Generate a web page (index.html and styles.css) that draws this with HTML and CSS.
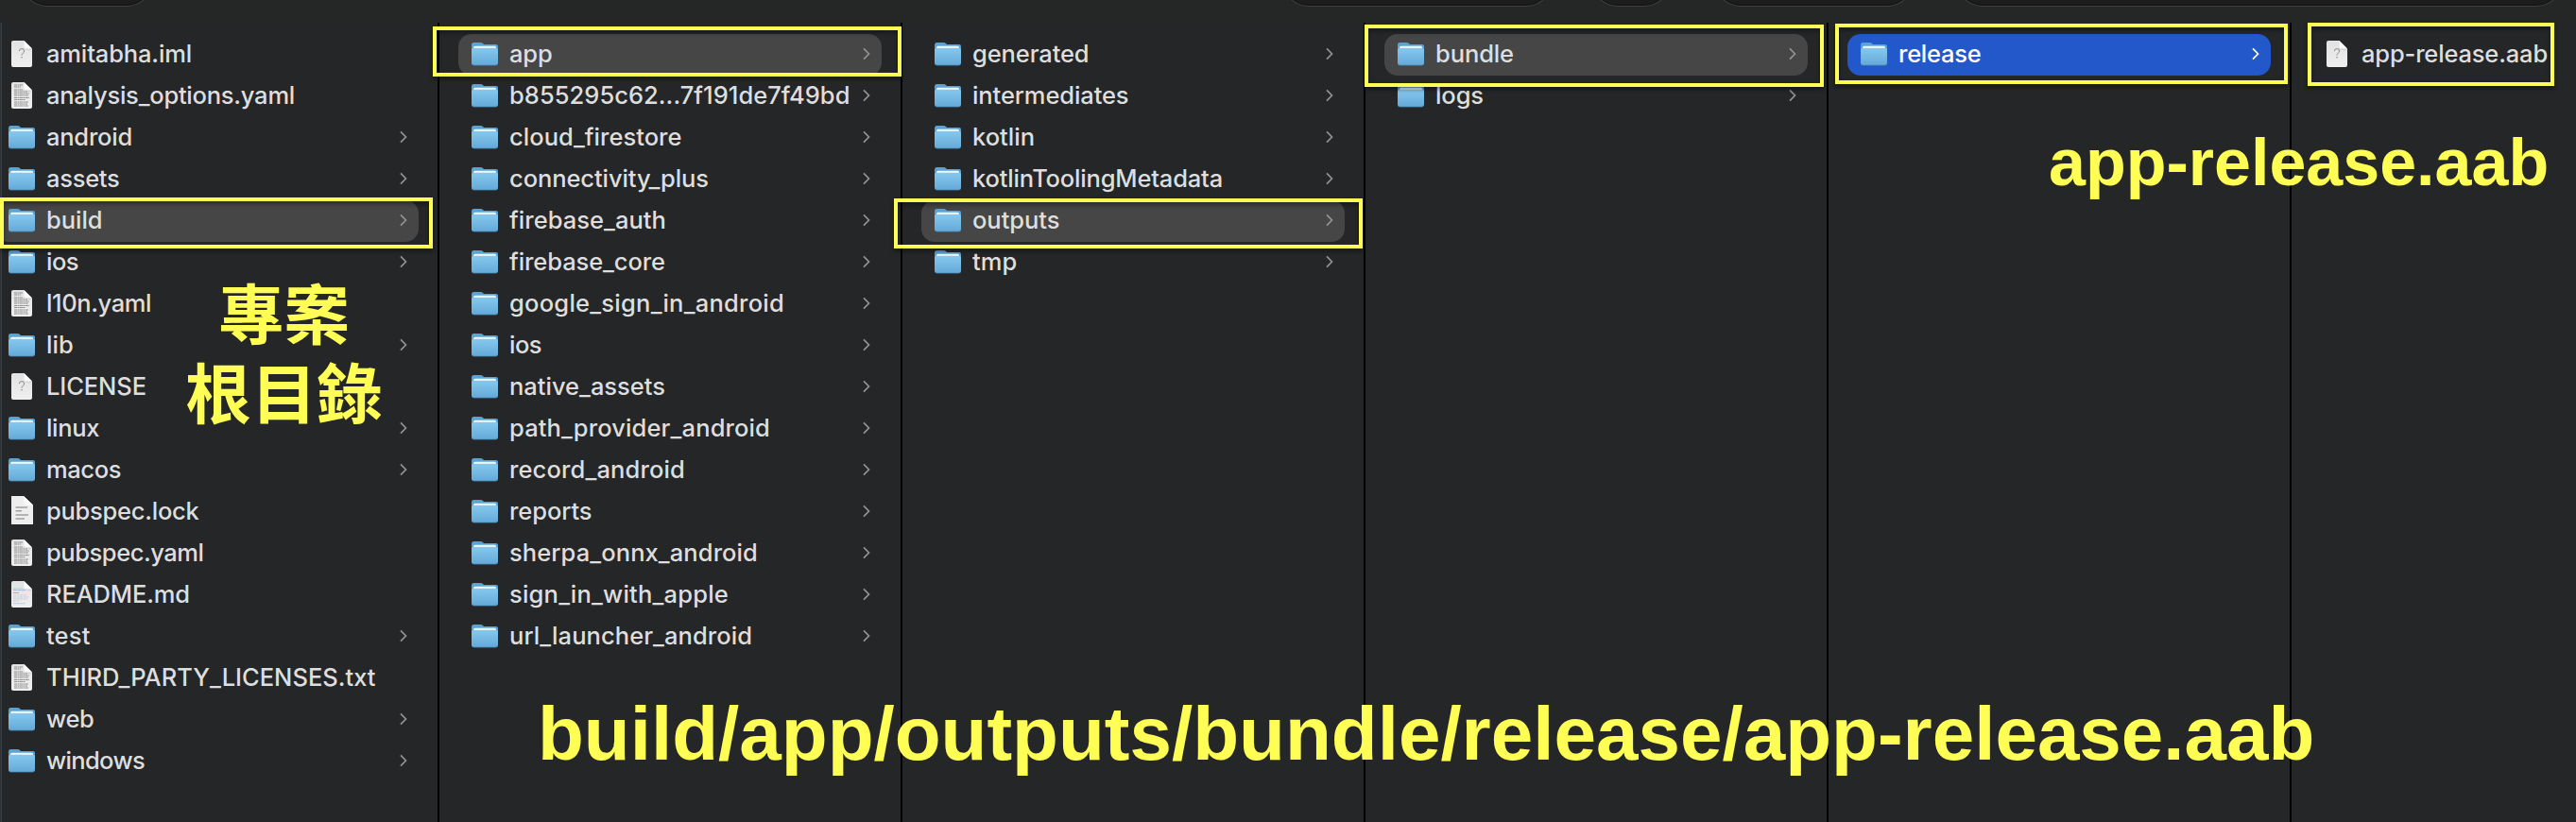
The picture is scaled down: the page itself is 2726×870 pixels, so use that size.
FILE: index.html
```
<!DOCTYPE html>
<html lang="zh-Hant">
<head>
<meta charset="utf-8">
<title>Finder</title>
<link rel="stylesheet" href="styles.css">
</head>
<body>
<svg width="0" height="0" class="defs">
  <defs>
    <linearGradient id="fg" x1="0" y1="0" x2="0" y2="1"><stop offset="0" stop-color="#86c8ee"/><stop offset="1" stop-color="#64a9d8"/></linearGradient>
    <linearGradient id="dg" x1="0" y1="0" x2="0" y2="1"><stop offset="0" stop-color="#e2e2e2"/><stop offset="1" stop-color="#efefef"/></linearGradient>
    <symbol id="folder" viewBox="0 0 28 26">
      <path d="M0 3.5Q0 1 2.5 1H9.5Q11 1 12 2L13 3H26Q28 3 28 5V12H0Z" fill="#5ba3d3"/>
      <rect x="2" y="4.800" width="24" height="5" rx="1.500" fill="#f6fafc"/>
      <path d="M0 9Q0 7 2 6.700H26Q28 7 28 9V22.500Q28 25 25.500 25H2.500Q0 25 0 22.500Z" fill="url(#fg)"/>
      <path d="M.3 23.300Q1 25 2.500 25H25.500Q27 25 27.700 23.300" fill="none" stroke="#4c8dba" stroke-width=".8"/>
    </symbol>
    <symbol id="page" viewBox="0 0 22 28">
      <path d="M2 0H13.500L22 8.500V26Q22 28 20 28H2Q0 28 0 26V2Q0 0 2 0Z" fill="url(#dg)"/>
      <path d="M13.500 0L22 8.500H15Q13.500 8.500 13.500 7Z" fill="#fafafa"/>
      <path d="M13.500 7Q13.500 8.500 15 8.500H22L20 10.500L12 9Z" fill="#000" opacity=".08"/>
    </symbol>
    <symbol id="unknown" viewBox="0 0 22 28">
      <use href="#page" width="22" height="28"/>
      <path d="M8.300 11.200Q8.300 8.600 10.900 8.600Q13.600 8.600 13.600 11Q13.600 12.500 12.200 13.300Q11 14.100 11 15.600" fill="none" stroke="#8b8b8b" stroke-width="1"/>
      <circle cx="11" cy="17.800" r=".8" fill="#8b8b8b"/>
    </symbol>
    <symbol id="text" viewBox="0 0 22 28">
      <use href="#page" width="22" height="28"/>
      <path d="M3 3H12M3 5H10M3 8H12M3 10H17M3 12H19M3 14H18M3 16.500H19M3 18.500H15M3 21H18M3 23H17M3 25H18" stroke="#8d8d8d" stroke-width="1" stroke-dasharray="3 .5 2 .4" fill="none"/>
    </symbol>
    <symbol id="lock" viewBox="0 0 23 30">
      <path d="M0 0H13L23 9.500V30H0Z" fill="#eee"/>
      <path d="M13 0L23 9.500H15.500Q13.500 9.500 13.500 7.500Z" fill="#fbfbfb"/>
      <path d="M4.500 12H17M4.500 15.700H11M4.500 20H18M4.500 24H14" stroke="#a0a0a0" stroke-width="1.500"/>
    </symbol>
    <symbol id="readme" viewBox="0 0 22 28">
      <use href="#page" width="22" height="28"/>
      <path d="M2 8H12" stroke="#9fc9cf" stroke-width="1" stroke-dasharray="3 .5"/>
      <path d="M2 9.700H15" stroke="#a5b5de" stroke-width="1" stroke-dasharray="4 .5"/>
      <path d="M2 12.500H8" stroke="#ef8fa2" stroke-width="1"/>
      <path d="M2 15H16M2 17H18M2 19H17M2 21H8" stroke="#cdcbdc" stroke-width="1" stroke-dasharray="3 .5"/>
      <path d="M2 23.700H15" stroke="#b3d0e8" stroke-width="1"/>
    </symbol>
    <symbol id="chev" viewBox="0 0 8 14"><path d="M1 1.300L6.500 7L1 12.700" fill="none" stroke="currentColor" stroke-width="1.700"/></symbol>
  </defs>
</svg>
<div class="window">
  <header class="toolbar">
    <i class="pill p1"></i><i class="pill p2"></i><i class="pill p3"></i><i class="pill p4"></i><i class="pill p5"></i>
  </header>
  <main class="columns" id="columns"></main>
  <div class="mark m-build"></div>
  <div class="mark m-app"></div>
  <div class="mark m-outputs"></div>
  <div class="mark m-bundle"></div>
  <div class="mark m-release"></div>
  <div class="mark m-aab"></div>
  <div class="note n-root">專案<br>根目錄</div>
  <div class="note n-aab">app-release.aab</div>
  <div class="note n-path">build/app/outputs/bundle/release/app-release.aab</div>
</div>
<script src="app.js"></script>
</body>
</html>
```
FILE: app.js
```
// Each item: [name, label width in px, icon]; the icon defaults to a folder.
const columns = [
  { selected: 'build', items: [
    ['amitabha.iml', 154, 'unknown'], ['analysis_options.yaml', 263, 'text'], ['android', 91], ['assets', 77.5],
    ['build', 59.5], ['ios', 34], ['l10n.yaml', 111, 'text'], ['lib', 29], ['LICENSE', 106, 'unknown'],
    ['linux', 56], ['macos', 79], ['pubspec.lock', 161.5, 'lock'], ['pubspec.yaml', 166.5, 'text'],
    ['README.md', 152, 'readme'], ['test', 46.5], ['THIRD_PARTY_LICENSES.txt', 348.5, 'text'], ['web', 50.5], ['windows', 104]] },
  { selected: 'app', items: [
    ['app', 45.5], ['b855295c62...7f191de7f49bd', 360.5], ['cloud_firestore', 182.5], ['connectivity_plus', 211],
    ['firebase_auth', 166], ['firebase_core', 165], ['google_sign_in_android', 291], ['ios', 34],
    ['native_assets', 165], ['path_provider_android', 276], ['record_android', 186], ['reports', 87.5],
    ['sherpa_onnx_android', 263], ['sign_in_with_apple', 232], ['url_launcher_android', 257]] },
  { selected: 'outputs', items: [
    ['generated', 123.5], ['intermediates', 165.5], ['kotlin', 66], ['kotlinToolingMetadata', 265], ['outputs', 92.5], ['tmp', 47.5]] },
  { selected: 'bundle', items: [['bundle', 83], ['logs', 51]] },
  { selected: 'release', active: true, items: [['release', 87.5]] },
  { items: [['app-release.aab', 197, 'unknown']] }
];

const svg = (id, cls) => `<svg class="${cls}"><use href="#${id}"/></svg>`;

document.getElementById('columns').innerHTML = columns.map(col => `<ul class="column">${col.items.map(([name, width, icon = 'folder']) => {
  const state = name === col.selected ? (col.active ? ' selected active' : ' selected') : '';
  return `<li class="row${state}"><span class="icon">${svg(icon, icon)}</span><span class="name" data-width="${width}">${name}</span>${icon === 'folder' ? svg('chev', 'chev') : ''}</li>`;
}).join('')}</ul>`).join('');

// Track each label to its width.
document.querySelectorAll('.name').forEach(el => {
  const gap = (el.dataset.width - el.getBoundingClientRect().width) / el.textContent.length;
  el.style.letterSpacing = `${gap.toFixed(3)}px`;
});
```
FILE: styles.css
```
* { box-sizing: border-box; }
body { margin: 0; background: #242628; }
.defs { position: absolute; }
.window {
  position: relative;
  width: 2726px;
  height: 870px;
  overflow: hidden;
  background: #242628;
  font-family: Inter, "Noto Sans", sans-serif;
}
.window::before {
  content: "";
  position: absolute;
  left: 0;
  top: 24px;
  width: 2px;
  height: 846px;
  background: linear-gradient(90deg, #2b3338 50%, #3b3f42 50%);
}
.toolbar { position: relative; height: 24px; background: #242725; overflow: hidden; }
.pill {
  position: absolute;
  top: -50px;
  height: 57px;
  border: 1px solid #414443;
  border-top: 0;
  border-radius: 28px;
  background: #1c1c1c;
  box-shadow: inset 0 -1px 0 #101010;
}
.p1 { left: 22px; width: 140px; }
.p2 { left: 1357px; width: 286px; }
.p3 { left: 1684px; width: 84px; }
.p4 { left: 1814px; width: 211px; }
.p5 { left: 2070px; width: 642px; }

.columns { display: flex; height: 846px; margin-left: -25px; }
.column {
  flex: 0 0 490px;
  margin: 0;
  padding: 12px 20px 0;
  border-right: 2px solid #000;
  list-style: none;
}
.column:last-child { border-right: 0; }
.row {
  display: flex;
  align-items: center;
  height: 44px;
  padding: 0 12px 2px 14px;
  border-radius: 14px;
  color: #dedede;
  font-size: 25.500px;
  font-weight: 450;
  line-height: 42px;
  white-space: nowrap;
}
.selected { background: #464646; }
.active { background: #2358ca; color: #fff; }
.icon { display: flex; flex: 0 0 28px; justify-content: center; margin-right: 12px; }
.folder { width: 28px; height: 26px; }
.unknown, .text, .readme { width: 22px; height: 28px; }
.lock { width: 23px; height: 30px; margin-top: -2px; }
.name { flex: none; }
.chev { width: 8px; height: 14px; margin-left: auto; color: #929394; }
.active .chev { color: #fff; }

.mark { position: absolute; border: 4px solid #fffe54; box-shadow: 0 3px 4px rgba(0,0,0,.4), inset 0 3px 4px rgba(0,0,0,.35); }
.m-build { left: 0; top: 209px; width: 458px; height: 54px; }
.m-app { left: 458px; top: 28px; width: 496px; height: 53px; }
.m-outputs { left: 946px; top: 210px; width: 496px; height: 53px; }
.m-bundle { left: 1444px; top: 26px; width: 486px; height: 66px; }
.m-release { left: 1942px; top: 25px; width: 479px; height: 64px; }
.m-aab { left: 2442px; top: 24px; width: 261px; height: 67px; }

.note { position: absolute; color: #fffe54; font-family: "Liberation Sans", "Noto Sans CJK TC", sans-serif; font-weight: 700; white-space: nowrap; line-height: 1; }
.n-root { left: 196px; top: 287px; width: 209px; font-family: "Noto Sans CJK TC", sans-serif; font-size: 69.500px; line-height: 84px; text-align: center; }
.n-aab { left: 2168px; top: 137px; font-size: 70px; }
.n-path { left: 569px; top: 737px; font-size: 80px; }
```
